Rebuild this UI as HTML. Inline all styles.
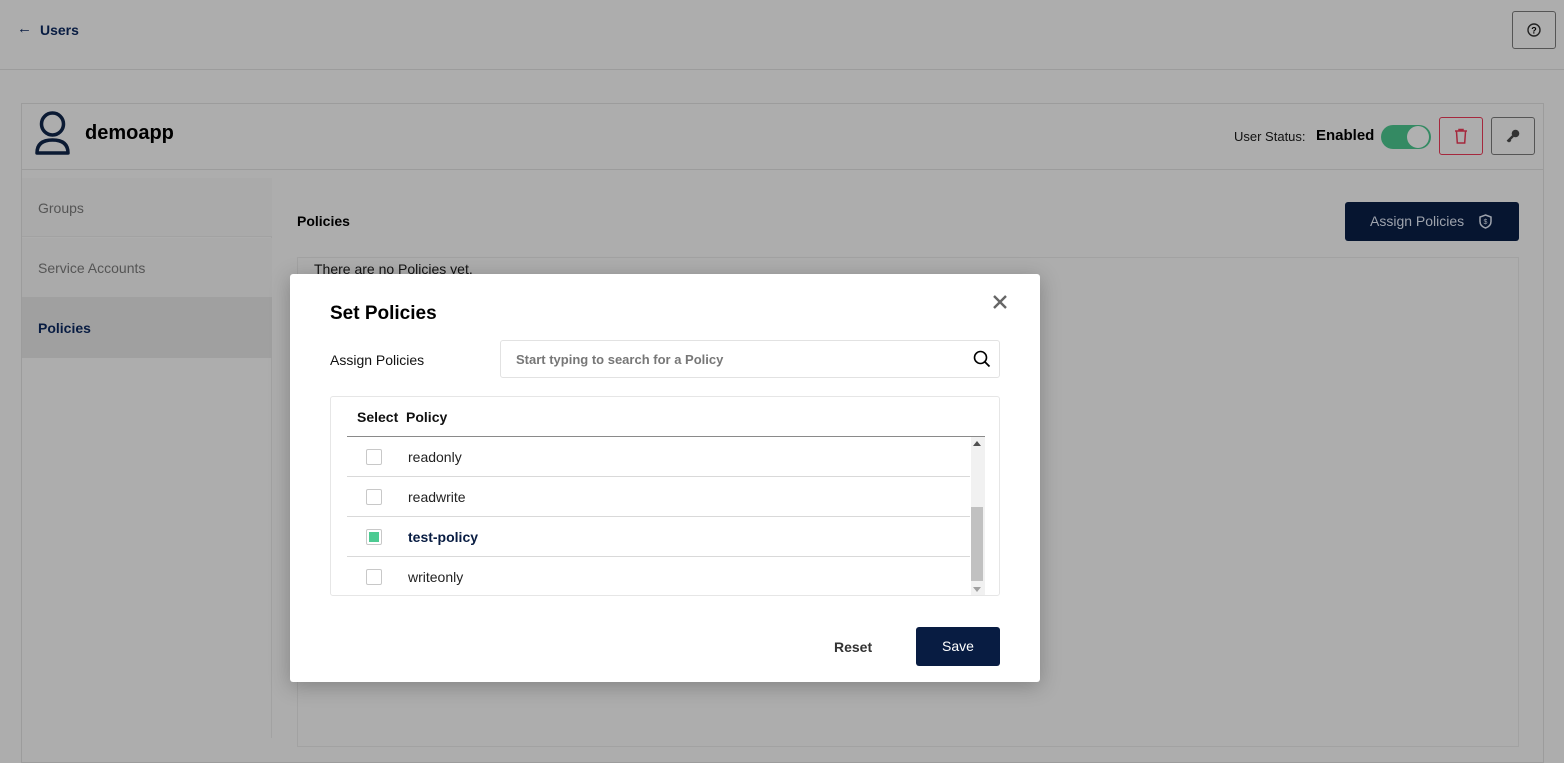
<!DOCTYPE html>
<html><head><meta charset="utf-8"><style>
*{box-sizing:border-box;margin:0;padding:0}
body{width:1564px;height:738px;overflow:hidden;background:#adadad;font-family:"Liberation Sans",sans-serif;position:relative;color:#000}
.a{position:absolute}
</style></head><body>
<div class="a" style="left:0;top:0;width:1564px;height:70px;border-bottom:1px solid #9c9c9c"></div>
<div class="a" style="left:17px;top:20px;font-size:15px;font-weight:bold;color:#081c42">←</div>
<div class="a" style="left:40px;top:22px;font-size:14px;font-weight:bold;color:#081c42">Users</div>
<div class="a" style="left:1512px;top:11px;width:44px;height:38px;border:1px solid #555;border-radius:3px"></div>
<svg class="a" style="left:1527px;top:23px" width="14" height="14" viewBox="0 0 14 14"><circle cx="7" cy="7" r="6" fill="none" stroke="#222" stroke-width="1.4"/><text x="7" y="10.5" font-size="9" font-weight="bold" text-anchor="middle" font-family="Liberation Sans">?</text></svg>

<div class="a" style="left:21px;top:103px;width:1523px;height:660px;border:1px solid #9c9c9c"></div>
<div class="a" style="left:21px;top:169px;width:1523px;height:1px;background:#9c9c9c"></div>
<svg class="a" style="left:34px;top:111px" width="38" height="46" viewBox="0 0 38 46"><circle cx="18.5" cy="13" r="11" fill="none" stroke="#0b1a33" stroke-width="3.5"/><path d="M3 42 Q3 29 18.5 29 Q34 29 34 42 Z" fill="none" stroke="#0b1a33" stroke-width="3.5" stroke-linejoin="round"/></svg>
<div class="a" style="left:85px;top:122px;font-size:20px;font-weight:bold">demoapp</div>
<div class="a" style="left:1234px;top:129px;font-size:13px;color:#111">User Status:</div>
<div class="a" style="left:1316px;top:127px;font-size:15px;font-weight:bold">Enabled</div>
<div class="a" style="left:1381px;top:125px;width:50px;height:24px;border-radius:12px;background:#348a63"></div>
<div class="a" style="left:1407px;top:126px;width:22px;height:22px;border-radius:50%;background:#b0b0b0"></div>
<div class="a" style="left:1439px;top:117px;width:44px;height:38px;border:1px solid #a5283d;border-radius:3px"></div>
<svg class="a" style="left:1454px;top:128px" width="14" height="16" viewBox="0 0 14 16"><path d="M1 3H13M5 3V1.5H9V3M2.5 3.5L3.3 15H10.7L11.5 3.5" fill="none" stroke="#a5283d" stroke-width="1.5"/></svg>
<div class="a" style="left:1491px;top:117px;width:44px;height:38px;border:1px solid #555;border-radius:3px"></div>
<svg class="a" style="left:1506px;top:129px" width="14" height="14" viewBox="0 0 14 14"><circle cx="9.5" cy="4.5" r="3.8" fill="#333"/><path d="M7 7L1.5 12.5M3 11L4.5 12.5" stroke="#333" stroke-width="2.4"/></svg>

<div class="a" style="left:22px;top:178px;width:250px;height:560px;border-right:1px solid #a2a2a2"></div>
<div class="a" style="left:22px;top:178px;width:250px;height:59px;border-bottom:1px solid #a2a2a2;background:#aaaaaa"></div>
<div class="a" style="left:22px;top:238px;width:250px;height:59px;background:#aaaaaa"></div>
<div class="a" style="left:22px;top:297px;width:250px;height:61px;background:#a0a0a0"></div>
<div class="a" style="left:38px;top:200px;font-size:14px;color:#555">Groups</div>
<div class="a" style="left:38px;top:260px;font-size:14px;color:#555">Service Accounts</div>
<div class="a" style="left:38px;top:320px;font-size:14px;font-weight:bold;color:#081c42">Policies</div>

<div class="a" style="left:297px;top:213px;font-size:14px;font-weight:bold">Policies</div>
<div class="a" style="left:1345px;top:202px;width:174px;height:39px;background:#061530;border-radius:3px;color:#9ea3ad;font-size:14px;padding:11px 0 0 25px">Assign Policies</div>
<svg class="a" style="left:1479px;top:214px" width="13" height="15" viewBox="0 0 13 15"><path d="M6.5 1L12 3V7.5Q12 12 6.5 14Q1 12 1 7.5V3Z" fill="none" stroke="#9ea3ad" stroke-width="1.5"/><text x="6.5" y="10" font-size="7" text-anchor="middle" fill="#9ea3ad" font-family="Liberation Sans">$</text></svg>
<div class="a" style="left:297px;top:257px;width:1222px;height:490px;border:1px solid #a2a2a2"></div>
<div class="a" style="left:314px;top:261px;font-size:14px;color:#111">There are no Policies yet.</div>

<div class="a" style="left:290px;top:274px;width:750px;height:408px;background:#fff;border-radius:3px;box-shadow:0 4px 20px rgba(0,0,0,.25)"></div>
<svg class="a" style="left:992px;top:294px" width="16" height="16" viewBox="0 0 16 16"><path d="M2 2L14 14M14 2L2 14" stroke="#666" stroke-width="2.4"/></svg>
<div class="a" style="left:330px;top:303px;font-size:19px;font-weight:bold">Set Policies</div>
<div class="a" style="left:330px;top:352px;font-size:14px;color:#111">Assign Policies</div>
<div class="a" style="left:500px;top:340px;width:500px;height:38px;border:1px solid #e2e2e2;border-radius:3px"></div>
<div class="a" style="left:516px;top:352px;font-size:13px;font-weight:bold;color:#777">Start typing to search for a Policy</div>
<svg class="a" style="left:973px;top:350px" width="18" height="18" viewBox="0 0 18 18"><circle cx="7.5" cy="7.5" r="6" fill="none" stroke="#000" stroke-width="1.6"/><path d="M12 12L16.5 16.5" stroke="#000" stroke-width="1.8"/></svg>

<div class="a" style="left:330px;top:396px;width:670px;height:200px;border:1px solid #e6e6e6;border-radius:3px"></div>
<div class="a" style="left:357px;top:409px;font-size:14px;font-weight:bold;color:#111">Select&nbsp; Policy</div>
<div class="a" style="left:347px;top:436px;width:638px;height:1px;background:#8a8a8a"></div>
<div class="a" style="left:971px;top:437px;width:14px;height:158px;background:#f1f1f1"></div>
<div class="a" style="left:971px;top:507px;width:12px;height:74px;background:#c1c1c1"></div>
<div class="a" style="left:973px;top:441px;width:0;height:0;border:4px solid transparent;border-bottom:5px solid #505050;border-top:0"></div>
<div class="a" style="left:973px;top:587px;width:0;height:0;border:4px solid transparent;border-top:5px solid #a0a0a0;border-bottom:0"></div>

<div class="a" style="left:347px;top:476px;width:623px;height:1px;background:#d9d9d9"></div>
<div class="a" style="left:347px;top:516px;width:623px;height:1px;background:#d9d9d9"></div>
<div class="a" style="left:347px;top:556px;width:623px;height:1px;background:#d9d9d9"></div>

<div class="a" style="left:366px;top:449px;width:16px;height:16px;border:1px solid #c8c8c8;border-radius:2px"></div>
<div class="a" style="left:366px;top:489px;width:16px;height:16px;border:1px solid #c8c8c8;border-radius:2px"></div>
<div class="a" style="left:366px;top:529px;width:16px;height:16px;border:1px solid #c8c8c8;border-radius:2px;padding:2px"><div style="width:10px;height:10px;background:#4ccb92"></div></div>
<div class="a" style="left:366px;top:569px;width:16px;height:16px;border:1px solid #c8c8c8;border-radius:2px"></div>
<div class="a" style="left:408px;top:449px;font-size:14px;color:#222">readonly</div>
<div class="a" style="left:408px;top:489px;font-size:14px;color:#222">readwrite</div>
<div class="a" style="left:408px;top:529px;font-size:14px;font-weight:bold;color:#081c42">test-policy</div>
<div class="a" style="left:408px;top:569px;font-size:14px;color:#222">writeonly</div>

<div class="a" style="left:834px;top:639px;font-size:14px;font-weight:bold;color:#333">Reset</div>
<div class="a" style="left:916px;top:627px;width:84px;height:39px;background:#081c42;border-radius:3px;color:#fff;font-size:14px;text-align:center;line-height:39px">Save</div>
</body></html>
